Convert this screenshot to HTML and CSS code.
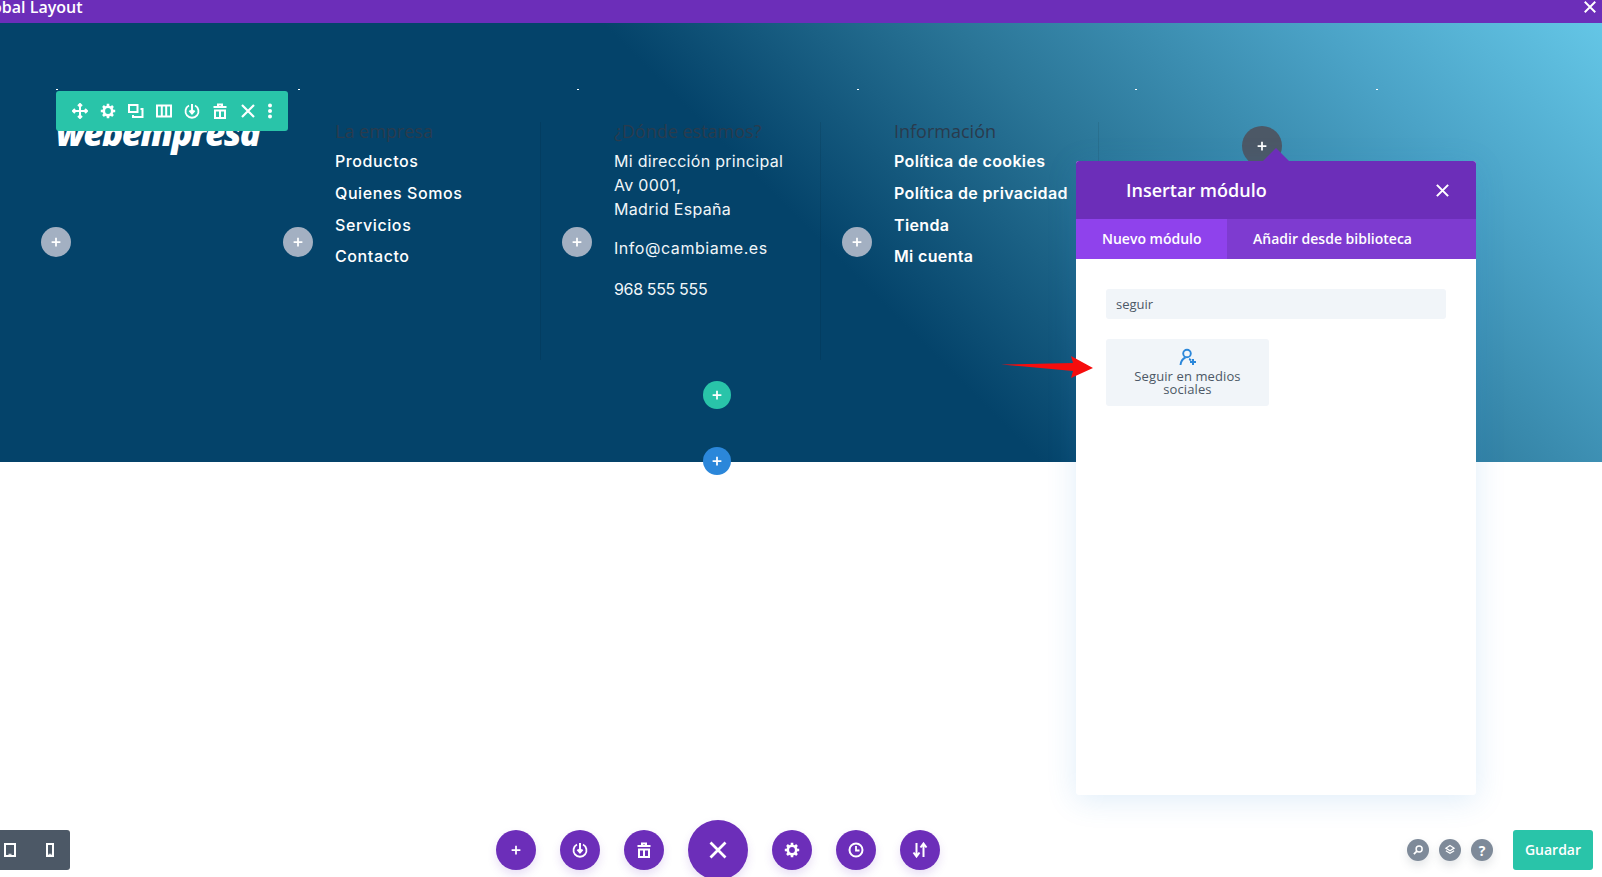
FILE: index.html
```html
<!DOCTYPE html>
<html lang="es">
<head>
<meta charset="utf-8">
<title>Global Layout</title>
<link rel="stylesheet" href="styles.css">
</head>
<body>
<svg class="defs" xmlns="http://www.w3.org/2000/svg">
  <symbol id="i-move" viewBox="0 0 16 16"><path d="M8 1v14M1 8h14M6 3l2-2 2 2M6 13l2 2 2-2M3 6L1 8l2 2M13 6l2 2-2 2" fill="none" stroke="currentColor" stroke-width="2"/></symbol>
  <symbol id="i-gear" viewBox="0 0 16 16"><circle cx="8" cy="8" r="4.200" fill="none" stroke="currentColor" stroke-width="2.600"/><path d="M8 .8v2.800M8 12.400v2.800M.8 8h2.800M12.400 8h2.800M3 3L5 5M11 11l2 2M3 13L5 11M11 5l2-2" stroke="currentColor" stroke-width="2.600"/></symbol>
  <symbol id="i-dup" viewBox="0 0 16 16"><path d="M1 2h8.500v7H1zM12.500 6H14.500V14H5V12" fill="none" stroke="currentColor" stroke-width="2"/></symbol>
  <symbol id="i-cols" viewBox="0 0 16 16"><path d="M1 2.500h14v11H1zM5.800 2.500v11M10.200 2.500v11" fill="none" stroke="currentColor" stroke-width="2"/></symbol>
  <symbol id="i-power" viewBox="0 0 16 16"><path d="M5 2.500a6.500 6.500 0 1 0 6 0" fill="none" stroke="currentColor" stroke-width="1.800"/><path d="M8 1v9M5.500 7.500L8 10.500l2.500-3" fill="none" stroke="currentColor" stroke-width="2"/></symbol>
  <symbol id="i-trash" viewBox="0 0 16 16"><path d="M1.500 4h13M6 4V1.500h4V4" fill="none" stroke="currentColor" stroke-width="2"/><path d="M3 7.500h10V15H3zM8 8v6" fill="none" stroke="currentColor" stroke-width="2"/></symbol>
  <symbol id="i-x" viewBox="0 0 16 16"><path d="M2 2l12 12M14 2L2 14" fill="none" stroke="currentColor" stroke-width="2.200"/></symbol>
  <symbol id="i-dots" viewBox="0 0 16 16"><circle cx="8" cy="2.500" r="2"/><circle cx="8" cy="8" r="2"/><circle cx="8" cy="13.500" r="2"/></symbol>
  <symbol id="i-plus" viewBox="0 0 16 16"><path d="M8 3v10M3 8h10" fill="none" stroke="currentColor" stroke-width="2"/></symbol>
  <symbol id="i-clock" viewBox="0 0 16 16"><circle cx="8" cy="8" r="6.500" fill="none" stroke="currentColor" stroke-width="2"/><path d="M8 4v4.500h3.500" fill="none" stroke="currentColor" stroke-width="1.800"/></symbol>
  <symbol id="i-sort" viewBox="0 0 16 16"><path d="M4.500 1v13M1.500 10.500l3 4 3-4M11.500 15V2M8.500 5.500l3-4 3 4" fill="none" stroke="currentColor" stroke-width="2"/></symbol>
  <symbol id="i-search" viewBox="0 0 16 16"><circle cx="9.500" cy="6.500" r="4" fill="none" stroke="currentColor" stroke-width="2"/><path d="M6.500 9.500L2.500 13.500" fill="none" stroke="currentColor" stroke-width="2.400"/></symbol>
  <symbol id="i-layers" viewBox="0 0 16 16"><path d="M8 2l5.500 3.500L8 9 2.500 5.500zM2.500 9L8 12.500 13.500 9" fill="none" stroke="currentColor" stroke-width="1.600"/></symbol>
  <symbol id="i-tablet" viewBox="0 0 12 14"><path d="M1 1h10v12H1z" fill="none" stroke="currentColor" stroke-width="2"/><path d="M4.500 10.800h3v1h-3z"/></symbol>
  <symbol id="i-phone" viewBox="0 0 8 14"><path d="M1 1h6v12H1z" fill="none" stroke="currentColor" stroke-width="2"/><path d="M2.500 10.800h3v1h-3z"/></symbol>
  <symbol id="i-follow" viewBox="0 0 18 18"><circle cx="8" cy="5.500" r="3.800" fill="none" stroke="currentColor" stroke-width="1.900"/><path d="M1.500 17c.5-4 2.500-6.500 5-7.500M10 11c1 .3 1.500.8 2 1.500" fill="none" stroke="currentColor" stroke-width="1.900"/><path d="M14 11v6M11 14h6" fill="none" stroke="currentColor" stroke-width="2"/></symbol>
</svg>

<header class="topbar">
  <span class="topbar-title">Global Layout</span>
  <svg class="topbar-close"><use href="#i-x"/></svg>
</header>

<main class="canvas">
  <div class="section-tab"></div>
  <section class="footer-section">
    <div class="row">
      <div class="col col-logo">
        <span class="tick"></span>
        <div class="logo">webempresa</div>
        <button class="add add-col"><svg><use href="#i-plus"/></svg></button>
      </div>
      <div class="col">
        <span class="tick"></span>
        <div class="col-body">
          <h4 class="col-title">La empresa</h4>
          <ul class="links">
            <li>Productos</li>
            <li>Quienes Somos</li>
            <li>Servicios</li>
            <li>Contacto</li>
          </ul>
        </div>
        <button class="add add-col"><svg><use href="#i-plus"/></svg></button>
      </div>
      <div class="col">
        <span class="tick"></span>
        <div class="col-body">
          <h4 class="col-title">¿Dónde estamos?</h4>
          <p class="address">Mi dirección principal<br>Av 0001,<br>Madrid España</p>
          <p class="address address-mail">Info@cambiame.es</p>
          <p class="address address-phone">968 555 555</p>
        </div>
        <button class="add add-col"><svg><use href="#i-plus"/></svg></button>
      </div>
      <div class="col">
        <span class="tick"></span>
        <div class="col-body">
          <h4 class="col-title">Información</h4>
          <ul class="links links-bold">
            <li>Política de cookies</li>
            <li>Política de privacidad</li>
            <li>Tienda</li>
            <li>Mi cuenta</li>
          </ul>
        </div>
        <button class="add add-col"><svg><use href="#i-plus"/></svg></button>
      </div>
      <div class="col col-last">
        <span class="tick"></span>
        <span class="tick tick-end"></span>
        <button class="add add-active"><svg><use href="#i-plus"/></svg></button>
      </div>

      <div class="row-toolbar">
        <svg class="tool"><use href="#i-move"/></svg>
        <svg class="tool"><use href="#i-gear"/></svg>
        <svg class="tool"><use href="#i-dup"/></svg>
        <svg class="tool"><use href="#i-cols"/></svg>
        <svg class="tool"><use href="#i-power"/></svg>
        <svg class="tool"><use href="#i-trash"/></svg>
        <svg class="tool"><use href="#i-x"/></svg>
        <svg class="tool tool-dots"><use href="#i-dots"/></svg>
      </div>
      <button class="add add-row"><svg><use href="#i-plus"/></svg></button>
    </div>
    <button class="add add-section"><svg><use href="#i-plus"/></svg></button>
  </section>
</main>

<aside class="panel">
  <span class="panel-notch"></span>
  <div class="panel-head">
    <span class="panel-title">Insertar módulo</span>
    <svg class="panel-close"><use href="#i-x"/></svg>
  </div>
  <div class="tabs">
    <span class="tab tab-active">Nuevo módulo</span>
    <span class="tab">Añadir desde biblioteca</span>
  </div>
  <div class="panel-body">
    <div class="search">seguir</div>
    <div class="module-card">
      <svg class="module-icon"><use href="#i-follow"/></svg>
      <span class="module-name">Seguir en medios sociales</span>
    </div>
  </div>
</aside>

<svg class="red-arrow" viewBox="0 0 92 22" xmlns="http://www.w3.org/2000/svg"><path d="M0 8.500L72 7 70 0 92 12 70 22 72 15z" fill="#f60d0d"/></svg>

<footer class="dock">
  <div class="devices">
    <svg class="device-tablet"><use href="#i-tablet"/></svg>
    <svg class="device-phone"><use href="#i-phone"/></svg>
  </div>
  <div class="actions">
    <span class="fab"><svg class="fab-plus"><use href="#i-plus"/></svg></span>
    <span class="fab"><svg><use href="#i-power"/></svg></span>
    <span class="fab"><svg><use href="#i-trash"/></svg></span>
    <span class="fab fab-main"><svg><use href="#i-x"/></svg></span>
    <span class="fab"><svg><use href="#i-gear"/></svg></span>
    <span class="fab"><svg><use href="#i-clock"/></svg></span>
    <span class="fab"><svg><use href="#i-sort"/></svg></span>
  </div>
  <div class="aside-tools">
    <span class="mini"><svg><use href="#i-search"/></svg></span>
    <span class="mini"><svg><use href="#i-layers"/></svg></span>
    <span class="mini mini-help">?</span>
    <span class="save">Guardar</span>
  </div>
</footer>
</body>
</html>
```
FILE: styles.css
```css
* { box-sizing: border-box; }
html, body { margin: 0; padding: 0; }
body {
  position: relative;
  width: 1602px;
  height: 877px;
  overflow: hidden;
  background: #fff;
  font-family: "Open Sans", "Liberation Sans", sans-serif;
}
.defs { display: none; }
button { border: 0; padding: 0; font: inherit; }

/* top bar */
.topbar {
  height: 23px;
  background: #6c2eb9;
  color: #fff;
  display: flex;
  align-items: center;
  justify-content: space-between;
  overflow: hidden;
}
.topbar-title {
  margin-left: -24px;
  margin-top: -9px;
  font-size: 16px;
  font-weight: 600;
  line-height: 22px;
  white-space: nowrap;
}
.topbar-close { width: 14px; height: 14px; margin-right: 5px; margin-top: -9px; }

/* canvas */
.canvas { position: relative; }
.section-tab {
  position: absolute;
  left: 0;
  top: 0;
  width: 16px;
  height: 40px;
  background: #2b87da;
  border-radius: 0 0 3px 0;
}
.footer-section {
  position: relative;
  height: 439px;
  padding: 66px 0 0 56px;
  background: linear-gradient(45deg, #04436a 51%, #2a7597 68%, #4ba3c7 86%, #64c6e6 100%);
}
.row {
  position: relative;
  height: 306px;
  display: grid;
  grid-template-columns: 206px 243px 244px 242px 243px;
  column-gap: 36px;
}
.col { position: relative; }
.tick {
  position: absolute;
  left: 0;
  top: 0;
  width: 2px;
  height: 1px;
  background: #fff;
}
.tick-end { left: auto; right: 0; }
.col-body {
  height: 238px;
  margin-top: 33px;
  padding-left: 37px;
  border-right: 1px solid rgba(0, 0, 0, .08);
}
.col-title {
  margin: 0 0 9px;
  font-size: 18px;
  font-weight: 400;
  line-height: 18px;
  color: #2a3b4d;
  white-space: nowrap;
}
.links { margin: 0; padding: 0; list-style: none; }
.links li {
  margin-bottom: 7.8px;
  font-family: Inter, "Liberation Sans", sans-serif;
  font-size: 16px;
  font-weight: 500;
  line-height: 24px;
  letter-spacing: .6px;
  color: #fff;
  white-space: nowrap;
}
.links-bold li { font-weight: 600; letter-spacing: .35px; }
.address {
  margin: 0 0 15px;
  font-family: Inter, "Liberation Sans", sans-serif;
  font-size: 16px;
  font-weight: 400;
  line-height: 24px;
  letter-spacing: .3px;
  color: #f1f6f9;
  white-space: nowrap;
}
.address-mail { margin-bottom: 16.5px; letter-spacing: .55px; }
.address-phone { letter-spacing: -.35px; }

.logo {
  margin-top: 24px;
  font-size: 35px;
  font-weight: 800;
  font-style: italic;
  line-height: 40px;
  letter-spacing: -1.5px;
  color: #fff;
  white-space: nowrap;
}

/* add buttons */
.add {
  position: absolute;
  display: flex;
  align-items: center;
  justify-content: center;
  border-radius: 50%;
  color: #fff;
}
.add svg { width: 14px; height: 14px; }
.add-col {
  left: -15px;
  top: 138px;
  width: 30px;
  height: 30px;
  background: #a3b0c2;
}
.add-active {
  left: 107px;
  top: 37px;
  width: 40px;
  height: 40px;
  background: #4c5866;
}
.add-row {
  left: 647px;
  top: 292px;
  width: 28px;
  height: 28px;
  background: #29c4a9;
}
.add-section {
  left: 703px;
  top: 424px;
  width: 28px;
  height: 28px;
  background: #2b87da;
}

/* row toolbar */
.row-toolbar {
  position: absolute;
  left: 0;
  top: 2px;
  width: 232px;
  height: 40px;
  padding: 0 10px;
  display: flex;
  align-items: center;
  background: #29c4a9;
  border-radius: 3px;
  color: #fff;
}
.tool { width: 16px; height: 16px; margin: 0 6px; fill: #fff; flex: none; }
.tool-dots { margin: 0; }

/* insert panel */
.panel {
  position: absolute;
  left: 1076px;
  top: 161px;
  width: 400px;
  height: 634px;
  display: flex;
  flex-direction: column;
  background: #fff;
  border-radius: 3px;
  box-shadow: 0 5px 30px rgba(43, 135, 218, .15);
}
.panel-notch {
  position: absolute;
  left: 186px;
  top: -13px;
  width: 0;
  height: 0;
  border-left: 14px solid transparent;
  border-right: 14px solid transparent;
  border-bottom: 14px solid #6c2eb9;
}
.panel-head {
  height: 58px;
  padding: 0 26px 0 50px;
  display: flex;
  align-items: center;
  justify-content: space-between;
  background: #6c2eb9;
  border-radius: 3px 3px 0 0;
  color: #fff;
}
.panel-title { font-size: 18px; font-weight: 600; }
.panel-close { width: 15px; height: 15px; }
.tabs {
  height: 40px;
  display: flex;
  background: #7e3bd0;
  color: #fff;
  font-size: 14px;
  font-weight: 600;
  line-height: 40px;
}
.tab { padding: 0 26px; white-space: nowrap; }
.tab-active { width: 151px; background: #8f42ec; }
.panel-body { padding: 30px; }
.search {
  height: 30px;
  padding: 0 10px;
  background: #f1f5f9;
  border-radius: 3px;
  color: #4c5866;
  font-size: 13px;
  line-height: 30px;
}
.module-card {
  width: 163px;
  height: 67px;
  margin-top: 20px;
  padding: 9px 20px 0;
  display: flex;
  flex-direction: column;
  align-items: center;
  background: #f1f5f9;
  border-radius: 3px;
  color: #4c5866;
  text-align: center;
}
.module-icon { width: 18px; height: 18px; color: #2b87da; flex: none; }
.module-name { margin-top: 4px; font-size: 13px; line-height: 13px; letter-spacing: .1px; }

.red-arrow {
  position: absolute;
  left: 1001px;
  top: 356px;
  width: 92px;
  height: 22px;
}

/* bottom dock */
.dock {
  position: absolute;
  left: 0;
  right: 0;
  top: 820px;
  height: 60px;
  display: grid;
  grid-template-columns: 496px auto 1fr;
  align-items: center;
}
.devices {
  width: 70px;
  height: 40px;
  display: flex;
  align-items: center;
  background: #4c5866;
  border-radius: 0 3px 3px 0;
  color: #fff;
  fill: #fff;
}
.device-tablet { width: 12px; height: 14px; margin-left: 4px; }
.device-phone { width: 8px; height: 14px; margin-left: 30px; }
.actions { display: flex; align-items: center; gap: 24px; }
.fab {
  width: 40px;
  height: 40px;
  display: flex;
  align-items: center;
  justify-content: center;
  border-radius: 50%;
  background: #6c2eb9;
  color: #fff;
  fill: #fff;
  box-shadow: 0 5px 10px rgba(108, 46, 185, .15);
}
.fab svg { width: 16px; height: 16px; }
.fab .fab-plus { width: 14px; height: 14px; }
.fab-main { width: 60px; height: 60px; }
.fab.fab-main svg { width: 20px; height: 20px; }
.aside-tools {
  display: flex;
  align-items: center;
  justify-content: flex-end;
  padding-right: 9px;
  gap: 10px;
}
.mini {
  width: 22px;
  height: 22px;
  display: flex;
  align-items: center;
  justify-content: center;
  border-radius: 50%;
  background: #7e8a99;
  color: #fff;
  box-shadow: 0 5px 10px rgba(76, 88, 102, .15);
}
.mini svg { width: 12px; height: 12px; }
.mini-help { font-size: 14px; font-weight: 700; }
.save {
  width: 80px;
  height: 40px;
  margin-left: 10px;
  background: #29c4a9;
  border-radius: 3px;
  color: #fff;
  font-size: 14px;
  font-weight: 600;
  line-height: 40px;
  text-align: center;
}
```
